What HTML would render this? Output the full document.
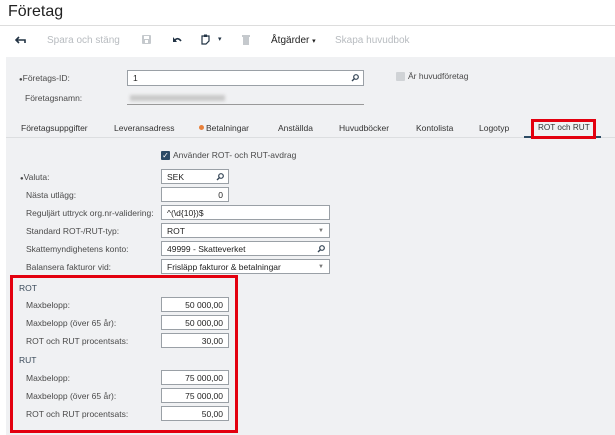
<!DOCTYPE html>
<html><head><meta charset="utf-8"><style>
*{margin:0;padding:0;box-sizing:border-box}
body{width:615px;height:435px;overflow:hidden;background:#fff;font-family:"Liberation Sans",sans-serif;position:relative;color:#333}
.a{position:absolute;white-space:nowrap}
.lbl{font-size:8.5px;color:#4a4a4a}
.in{position:absolute;background:#fff;border:1px solid #9aa0a6;height:15px;font-size:8.5px;color:#222;line-height:14px;padding:0 5px}
.r{text-align:right}
.tab{position:absolute;top:123px;font-size:8.5px;color:#333}
.s{position:absolute;right:4px;top:3px}
.dd{position:absolute;right:5px;top:0;font-size:6px;color:#777}
</style></head><body>
<div class="a" style="left:8px;top:3px;font-size:16px;color:#222">Företag</div>
<div class="a" style="left:0;top:25px;width:615px;height:1px;background:#ddd"></div>
<!-- toolbar -->
<svg class="a" style="left:15px;top:36px" width="11" height="8" viewBox="0 0 11 8"><path d="M4 1 L1 4 L4 7 M1 4 H10 V7" stroke="#234" stroke-width="1.6" fill="none"/></svg>
<div class="a" style="left:47px;top:35px;font-size:10px;color:#b8bcc0">Spara och stäng</div>
<svg class="a" style="left:142px;top:35px" width="9" height="9"><rect x="0" y="0" width="9" height="9" rx="1" fill="#c5c9cd"/><rect x="2" y="1" width="5" height="3" fill="#fff"/><rect x="3" y="5" width="3" height="3" fill="#fff"/></svg>
<svg class="a" style="left:172px;top:36px" width="10" height="7"><path d="M1 1 L1 6 L5 6 Z" fill="#234"/><path d="M3 4 Q6 1 9 5" stroke="#234" stroke-width="1.6" fill="none"/></svg>
<svg class="a" style="left:201px;top:34px" width="9" height="11"><path d="M1 2 H8 V7 L5 10 H1 Z" stroke="#234" stroke-width="1.2" fill="none"/><rect x="3" y="0.5" width="3" height="2.5" fill="#234"/></svg>
<div class="a" style="left:218px;top:35px;font-size:7px;color:#234">▾</div>
<svg class="a" style="left:242px;top:35px" width="8" height="10"><rect x="0" y="0" width="8" height="2" fill="#c5c9cd"/><rect x="1" y="2" width="6" height="8" fill="#c5c9cd"/></svg>
<div class="a" style="left:271px;top:35px;font-size:10px;color:#222">Åtgärder <span style="font-size:7px">▾</span></div>
<div class="a" style="left:335px;top:35px;font-size:10px;color:#b8bcc0">Skapa huvudbok</div>
<!-- panel -->
<div class="a" style="left:6px;top:57px;width:609px;height:378px;background:#f0f1f3"></div>
<div class="a lbl" style="left:19px;top:73px"><span style="font-size:6px">●</span>Företags-ID:</div>
<div class="in" style="left:127px;top:70px;width:237px;height:16px;line-height:15px">1<svg class="s" width="8" height="8"><circle cx="5" cy="3" r="2.3" stroke="#345" stroke-width="1.2" fill="none"/><path d="M3.3 4.7 L1 7" stroke="#345" stroke-width="1.4"/></svg></div>
<div class="a" style="left:396px;top:72px;width:9px;height:9px;background:#d0d3d6;border-radius:1px"></div>
<div class="a lbl" style="left:408px;top:71px">Är huvudföretag</div>
<div class="a lbl" style="left:25px;top:93px">Företagsnamn:</div>
<div class="a" style="left:130px;top:95px;width:95px;height:6px;background:#c8c8c8;filter:blur(1.5px)"></div>
<div class="a" style="left:127px;top:104px;width:237px;height:1px;background:#999"></div>
<!-- tabs -->
<div class="tab" style="left:21px">Företagsuppgifter</div>
<div class="tab" style="left:114px">Leveransadress</div>
<div class="a" style="left:199px;top:125px;width:5px;height:5px;border-radius:50%;background:#e8803a"></div>
<div class="tab" style="left:206px">Betalningar</div>
<div class="tab" style="left:278px">Anställda</div>
<div class="tab" style="left:339px">Huvudböcker</div>
<div class="tab" style="left:416px">Kontolista</div>
<div class="tab" style="left:479px">Logotyp</div>
<div class="tab" style="left:538px;font-size:8.2px">ROT och RUT</div>
<div class="a" style="left:6px;top:137px;width:609px;height:1px;background:#dcdee0"></div>
<div class="a" style="left:524px;top:136px;width:77px;height:2px;background:#2c4a63"></div>
<div class="a" style="left:531px;top:119px;width:65px;height:20px;border:3px solid #e3000f"></div>
<!-- form -->
<div class="a" style="left:161px;top:151px;width:9px;height:9px;background:#2b4a66;border-radius:1px;color:#fff;font-size:8px;line-height:9px;text-align:center">✓</div>
<div class="a lbl" style="left:173px;top:150px">Använder ROT- och RUT-avdrag</div>
<div class="a lbl" style="left:20px;top:172px"><span style="font-size:6px">●</span>Valuta:</div>
<div class="in" style="left:161px;top:169px;width:68px">SEK<svg class="s" width="8" height="8"><circle cx="5" cy="3" r="2.3" stroke="#345" stroke-width="1.2" fill="none"/><path d="M3.3 4.7 L1 7" stroke="#345" stroke-width="1.4"/></svg></div>
<div class="a lbl" style="left:26px;top:190px">Nästa utlägg:</div>
<div class="in r" style="left:161px;top:187px;width:68px">0</div>
<div class="a lbl" style="left:26px;top:208px">Reguljärt uttryck org.nr-validering:</div>
<div class="in" style="left:161px;top:205px;width:169px">^(\d{10})$</div>
<div class="a lbl" style="left:26px;top:226px">Standard ROT-/RUT-typ:</div>
<div class="in" style="left:161px;top:223px;width:169px">ROT<span class="dd">▼</span></div>
<div class="a lbl" style="left:26px;top:244px">Skattemyndighetens konto:</div>
<div class="in" style="left:161px;top:241px;width:169px">49999 - Skatteverket<svg class="s" width="8" height="8"><circle cx="5" cy="3" r="2.3" stroke="#345" stroke-width="1.2" fill="none"/><path d="M3.3 4.7 L1 7" stroke="#345" stroke-width="1.4"/></svg></div>
<div class="a lbl" style="left:26px;top:262px">Balansera fakturor vid:</div>
<div class="in" style="left:161px;top:259px;width:169px">Frisläpp fakturor &amp; betalningar<span class="dd">▼</span></div>
<!-- ROT/RUT -->
<div class="a" style="left:19px;top:283px;font-size:8.5px;color:#3a4a5a">ROT</div>
<div class="a lbl" style="left:26px;top:300px">Maxbelopp:</div>
<div class="in r" style="left:161px;top:297px;width:68px">50 000,00</div>
<div class="a lbl" style="left:26px;top:318px">Maxbelopp (över 65 år):</div>
<div class="in r" style="left:161px;top:315px;width:68px">50 000,00</div>
<div class="a lbl" style="left:26px;top:336px">ROT och RUT procentsats:</div>
<div class="in r" style="left:161px;top:333px;width:68px">30,00</div>
<div class="a" style="left:19px;top:355px;font-size:8.5px;color:#3a4a5a">RUT</div>
<div class="a lbl" style="left:26px;top:373px">Maxbelopp:</div>
<div class="in r" style="left:161px;top:370px;width:68px">75 000,00</div>
<div class="a lbl" style="left:26px;top:391px">Maxbelopp (över 65 år):</div>
<div class="in r" style="left:161px;top:388px;width:68px">75 000,00</div>
<div class="a lbl" style="left:26px;top:409px">ROT och RUT procentsats:</div>
<div class="in r" style="left:161px;top:406px;width:68px">50,00</div>
<div class="a" style="left:10px;top:275px;width:228px;height:158px;border:3px solid #e3000f"></div>
</body></html>
